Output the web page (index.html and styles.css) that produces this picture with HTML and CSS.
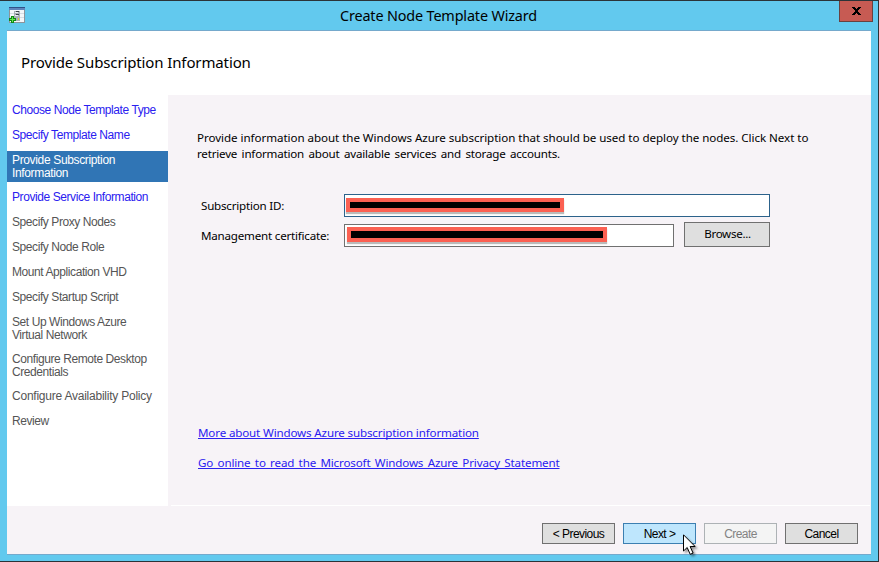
FILE: index.html
```
<!DOCTYPE html>
<html lang="en">
<head>
<meta charset="utf-8">
<title>Create Node Template Wizard</title>
<link rel="stylesheet" href="styles.css">
</head>
<body>
<div class="window">
  <header class="titlebar">
    <svg class="app-icon" width="16" height="16" viewBox="0 0 16 16" shape-rendering="crispEdges">
      <path fill="#8d949b" d="M0 0h16v16H0z"/>
      <path fill="#f4f7fa" d="M1 3h14v12H1z"/>
      <path fill="#2f5288" d="M0 0h16v1H0z"/>
      <path fill="#5f86bd" d="M0 1h16v2H0z"/>
      <path fill="#d7dde3" d="M1 6h14v1H1zM1 10h14v1H1z"/>
      <path fill="#aab1b8" d="M5 4h6v10H5z"/>
      <path fill="#eef1f4" d="M6 5h3v1H6zM6 8h3v1H6z"/>
      <path fill="#3d444b" d="M7 4h3v1H7zM7 7h3v1H7z"/>
      <path fill="#c9d92f" d="M9 11h1v2H9z"/>
      <path fill="#0f8a14" d="M2 9h3v2h2v3H5v2H2v-2H0v-3h2z"/>
      <path fill="#62e94f" d="M3 10h1v2h2v1H4v2H3v-2H1v-1h2z"/>
    </svg>
    <h1 class="caption">Create Node Template Wizard</h1>
    <button class="close" aria-label="Close"><svg width="9" height="8" viewBox="0 0 9 8" shape-rendering="crispEdges"><path d="M0 0h3v1h1v1h1V1h1V0h3v1H8v1H7v1H6v2h1v1h1v1h1v1H6V7H5V6H4v1H3v1H0V7h1V6h1V5h1V3H2V2H1V1H0z"/></svg></button>
  </header>
  <main class="client">
    <h2 class="heading">Provide Subscription Information</h2>
    <div class="middle">
      <ol class="steps">
        <li class="done">Choose Node Template Type</li>
        <li class="done">Specify Template Name</li>
        <li class="current">Provide Subscription<br>Information</li>
        <li class="done">Provide Service Information</li>
        <li>Specify Proxy Nodes</li>
        <li>Specify Node Role</li>
        <li>Mount Application VHD</li>
        <li>Specify Startup Script</li>
        <li class="double">Set Up Windows Azure<br>Virtual Network</li>
        <li class="double">Configure Remote Desktop<br>Credentials</li>
        <li class="loose">Configure Availability Policy</li>
        <li>Review</li>
      </ol>
      <section class="page">
        <p class="intro">Provide information about the Windows Azure subscription that should be used to deploy the nodes. Click Next to<br><span class="spaced">retrieve information about available services and storage accounts.</span></p>
        <div class="form">
          <label>Subscription ID:</label>
          <div class="field focused"><span class="redaction id"></span></div>
          <label class="lower">Management certificate:</label>
          <div class="field"><span class="redaction key"></span></div>
          <button class="btn browse">Browse...</button>
        </div>
        <nav class="links">
          <a>More about Windows Azure subscription information</a>
          <a class="spaced">Go online to read the Microsoft Windows Azure Privacy Statement</a>
        </nav>
      </section>
    </div>
    <footer class="actions">
      <button class="btn">&lt; Previous</button>
      <button class="btn primary">Next &gt;</button>
      <button class="btn disabled">Create</button>
      <button class="btn">Cancel</button>
    </footer>
  </main>
  <svg class="cursor" width="20" height="26" viewBox="0 0 20 26"><path d="M.5.8v16.2l3.7-3.5 3 6.8 2.9-1.2-3-6.6h5z" fill="#fff" stroke="#000"/></svg>
</div>
</body>
</html>
```
FILE: styles.css
```
* { box-sizing: border-box; }
body { margin: 0; width: 879px; height: 562px; overflow: hidden; font-family: "Noto Sans", sans-serif; font-size: 11.6px; color: #000; }
h1, h2, p, ol { margin: 0; padding: 0; font-weight: 400; }
button { margin: 0; padding: 0; font: inherit; color: inherit; border-radius: 0; }
.window { position: relative; width: 879px; height: 562px; padding: 0 7px; background: #62c9ee; border: solid #2b3338; border-width: 1px 1px 1px 0; }
.titlebar { display: flex; height: 29px; }
.app-icon { margin: 6px 0 0 2px; }
.caption { flex: 1; padding-left: 13px; text-align: center; font-size: 14.4px; line-height: 29px; letter-spacing: -.15px; }
.close { display: grid; place-items: center; width: 34px; height: 21px; margin-right: -2px; background: #c75b53; border: 1px solid #69413f; border-top: 0; }
.client { width: 864px; height: 525px; background: #f7f3f7; border: solid #75a9cc; border-width: 1px 0; }
.heading { height: 64px; padding: 0 14px; background: #fff; font-size: 15px; line-height: 63px; letter-spacing: -.12px; }
.middle { display: flex; height: 411px; }
.steps { width: 161px; padding-top: 6px; background: #fff; list-style: none; font: 12px/13px "Liberation Sans", sans-serif; letter-spacing: -.42px; color: #555; }
.steps li { height: 25px; padding: 3px 5px 2px; white-space: nowrap; }
.steps .done { color: #2a20f0; }
.steps .double { height: 37px; }
.steps .loose { letter-spacing: -.23px; }
.steps .current { height: 31px; margin-bottom: 6px; color: #fff; background: #3075b5; letter-spacing: -.35px; }
.page { display: flex; flex-direction: column; flex: 1; margin: 0 1px 0 3px; padding: 35px 0 0 26px; border-bottom: 1px solid #fff; }
.intro { line-height: 16px; white-space: nowrap; letter-spacing: -.055px; }
.intro .spaced { letter-spacing: -.2px; word-spacing: 1.6px; }
.form { display: grid; grid-template-columns: 143px 330px 10px 86px; grid-template-rows: 23px 25px; gap: 5px 0; margin: 32px 0 0 4px; line-height: 23px; letter-spacing: -.21px; }
.lower { padding-top: 2px; }
.field { height: 23px; align-self: end; padding: 3px 1px; background: #fff; border: 1px solid #707070; }
.focused { grid-column: 2 / -1; border-color: #2c628b; }
.redaction { display: block; border: 4px solid #fb6052; background: #000; box-shadow: 0 2px 1px #bbb; }
.id { width: 218px; height: 14px; }
.key { width: 260px; height: 15px; margin: -1px 0 0 1px; }
.btn { width: 73px; height: 21px; padding-top: 1px; background: #dfdfdf; border: 1px solid #707070; font: 12px/18px "Liberation Sans", sans-serif; letter-spacing: -.55px; }
.browse { grid-column: 4; width: 86px; height: 25px; padding: 0 0 1px 1px; font: 11.6px/22px "Noto Sans", sans-serif; letter-spacing: -.3px; }
.links { display: flex; flex-direction: column; align-items: flex-start; gap: 14px; margin: 178px 0 0 1px; line-height: 16px; letter-spacing: -.15px; }
.links a { color: #2a20f0; text-decoration: underline; text-decoration-skip-ink: none; text-decoration-thickness: 1px; text-underline-offset: 1px; }
.links .spaced { word-spacing: 1.5px; }
.actions { display: flex; justify-content: flex-end; gap: 8px; padding: 17px 13px 0 0; }
.primary { background: #bee6fd; border-color: #3c7fb1; }
.disabled { color: #838383; background: #f4f4f4; border-color: #adb2b5; }
.cursor { position: absolute; left: 683px; top: 533px; filter: drop-shadow(2px 2px 1px #0006); }
```
